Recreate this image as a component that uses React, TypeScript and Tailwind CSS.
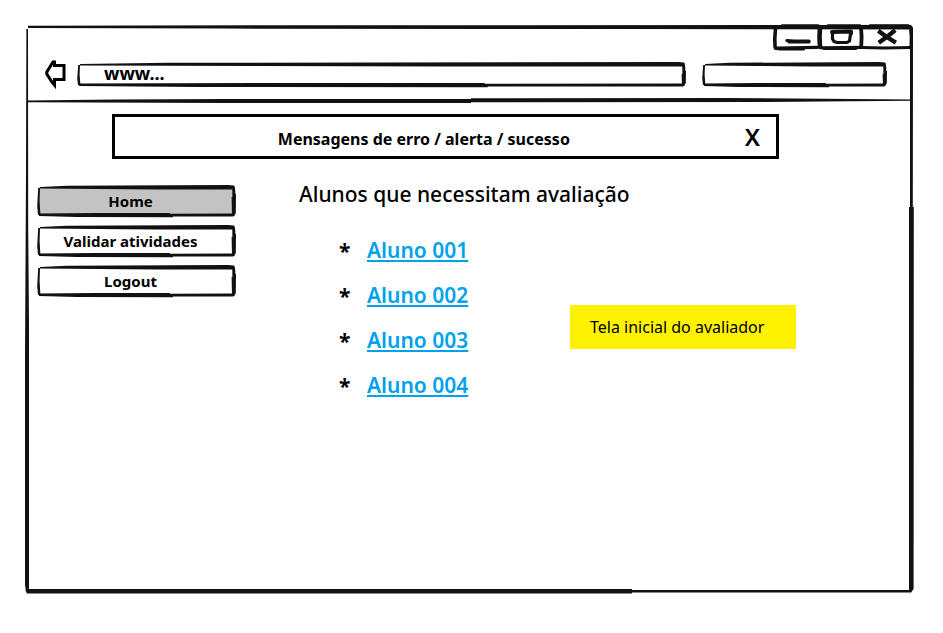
import type { ReactNode } from "react";

const INK = "#111";
const students = ["Aluno 001", "Aluno 002", "Aluno 003", "Aluno 004"];
const menu = [
  { label: "Home", active: true },
  { label: "Validar atividades", active: false },
  { label: "Logout", active: false },
];

/* Marker-pen outline: strokes swell and thin out along each side. */
function PenOutline({ w, h }: { w: number; h: number }) {
  const mid = Math.round(w * 0.67);
  return (
    <svg
      aria-hidden="true"
      className="pointer-events-none absolute inset-0 h-full w-full overflow-visible"
      viewBox={`0 0 ${w} ${h}`}
      preserveAspectRatio="none"
      fill={INK}
    >
      <path d={`M3 2 L${w * 0.15} 0.8 L${w - 8} 0 L${w - 2} 0.6 L${w - 2} 4.4 L${w * 0.6} 4.4 L${w * 0.3} 4 L3 3.6 Z`} />
      <path
        d={`M2 ${h - 3.4} L${w * 0.3} ${h - 4} L${mid} ${h - 4} L${mid} ${h - 3.2} L${w - 2} ${h - 3.4} L${w - 3} ${h - 0.4} L${mid + 3} ${h - 0.4} L${mid + 3} ${h + 0.2} L${w * 0.2} ${h} L2 ${h - 1} Z`}
      />
      <path d={`M1.2 3 L3 3 L2.6 ${h / 2} L3.4 ${h - 2} L1 ${h - 2} L0.2 ${h * 0.65} Z`} />
      <path
        d={`M${w - 3.8} 1 L${w - 1.4} 1 L${w - 0.8} 5 L${w - 0.6} 9 L${w} 9 L${w - 0.2} ${h - 4} L${w - 2} ${h - 0.6} L${w - 4} ${h - 2} L${w - 4.4} 12 L${w - 3.6} 12 Z`}
      />
    </svg>
  );
}

function WindowOutline() {
  return (
    <svg
      aria-hidden="true"
      className="pointer-events-none absolute inset-0 h-full w-full overflow-visible"
      viewBox="0 0 888 568"
      preserveAspectRatio="none"
      fill={INK}
    >
      <path d="M3 0.800 L300 0.200 L884 0 L888 2 L887 4.400 L600 4 L200 3.600 L3 3 Z" />
      <path d="M1.400 4 L3 4 L3.200 200 L4 300 L4 566 L1 566 L0 560 L0 330 L1 150 Z" />
      <path d="M885 2 L888 3 L887.800 182 L888.800 182 L888.600 564 L886 567.400 L884 566 L884 182 L885 182 Z" />
      <path d="M1 564 L607 564 L607 565 L887 565 L886 567.600 L607 567.600 L607 568.400 L2 568.400 L0.600 566 Z" />
    </svg>
  );
}

function Divider() {
  return (
    <svg
      aria-hidden="true"
      className="block h-[5px] w-full"
      viewBox="0 0 888 5"
      preserveAspectRatio="none"
      fill={INK}
    >
      <path d="M2 2.600 L90 1.600 L200 1 L446 1 L446 0.200 L700 0 L887 1.600 L887 2.800 L740 4 L446 4.200 L446 5 L200 5 L2 4.200 Z" />
    </svg>
  );
}

function ControlsOutline() {
  return (
    <svg
      aria-hidden="true"
      className="pointer-events-none absolute inset-0 h-full w-full overflow-visible"
      viewBox="0 0 139 26"
      preserveAspectRatio="none"
      fill="none"
      stroke={INK}
      strokeLinecap="round"
    >
      <path d="M3 2 L136 1.500" strokeWidth="3.600" />
      <path d="M8 0.500 L44 0.500 M54 0.500 L86 0.500 M96 0.500 L134 0.500" strokeWidth="2.400" />
      <path d="M1.500 4 L0.800 13 L1 21 Q1 23.400 3 23.400" strokeWidth="3.600" />
      <path d="M4 23 L43 22.400" strokeWidth="3.200" />
      <path d="M5 24.500 L30 24.500 M50 24 L82 24" strokeWidth="2" />
      <path d="M46 2 L45.500 12 L46 22" strokeWidth="4.600" />
      <path d="M48 22.800 L88 22.400" strokeWidth="3.200" />
      <path d="M87 2 L87.600 12 L87.200 22" strokeWidth="3.800" />
      <path d="M88 22.400 L110 23 L137 22.600" strokeWidth="3" />
      <path d="M136.500 3 L137.200 12 L137 21" strokeWidth="3" />
    </svg>
  );
}

function PenBox({ w, h, className, children }: { w: number; h: number; className: string; children: ReactNode }) {
  return (
    <div className={`relative ${className}`}>
      {children}
      <PenOutline w={w} h={h} />
    </div>
  );
}

export default function App() {
  return (
    <div className="flex min-h-screen bg-white pt-[25px] pr-[30px] pb-10 pl-[25px] font-['Comic_Sans_MS','Noto_Sans',sans-serif] text-black">
      <div className="relative flex-1">
        <WindowOutline />
        <header>
          <div className="flex justify-end">
            <div className="relative flex h-[26px]">
              <button type="button" aria-label="Minimizar" className="w-[46px]">
                <svg className="block h-full w-full" viewBox="0 0 46 26" fill="none" stroke={INK} strokeLinecap="round">
                  <path d="M13 15.500 L20 16 L35 16" strokeWidth="3.200" />
                  <path d="M15 17 L35 17" strokeWidth="3" />
                </svg>
              </button>
              <button type="button" aria-label="Maximizar" className="w-[42px]">
                <svg className="block h-full w-full" viewBox="0 0 42 26" fill="none" stroke={INK} strokeLinejoin="round" strokeLinecap="round">
                  <path d="M12 7 L31 6.500 L31 8.500" strokeWidth="4" />
                  <path d="M12.500 8 L12.500 14 L14 16.500 L17 17.500 L27 17.500 L29.500 16 L30.500 9" strokeWidth="3.200" />
                </svg>
              </button>
              <button type="button" aria-label="Fechar" className="w-[51px]">
                <svg className="block h-full w-full" viewBox="0 0 51 26" fill="none" stroke={INK} strokeLinecap="square">
                  <path d="M18 7 L24 11.500 L32 16.500" strokeWidth="4.400" />
                  <path d="M31.500 6.500 L26 11 L18.500 16.500" strokeWidth="4.400" />
                </svg>
              </button>
              <ControlsOutline />
            </div>
          </div>
          <div className="mt-[11px] mb-[11px] flex items-center pr-[26px] pl-5">
            <button type="button" aria-label="Voltar" className="mr-[10px]">
              <svg className="-my-1 block h-8 w-[22px]" viewBox="0 0 22 32" fill="none" stroke="#000" strokeWidth="3" strokeLinejoin="miter">
                <path d="M9.500 3 L8 3 L1.800 13 L1.800 15 L7 23 L9.500 26 L9.500 20.500 L19 20.500 L19 6.500 L9.500 6.500 Z" />
              </svg>
            </button>
            <PenBox w={608} h={25} className="flex-1">
              <input
                aria-label="Endereço"
                defaultValue="www..."
                className="block h-[25px] w-full bg-transparent pb-1 pl-[27px] text-lg font-bold outline-none"
              />
            </PenBox>
            <PenBox w={185} h={25} className="ml-4 w-[185px]">
              <input aria-label="Pesquisar" className="block h-[25px] w-full bg-transparent px-3 outline-none" />
            </PenBox>
          </div>
          <Divider />
        </header>

        <div role="alert" className="mt-[11px] mr-[134px] ml-[87px] flex h-[45px] items-center border-[3px] border-black pt-px pr-4">
          <p className="flex-1 pt-1 pr-3 text-center text-base font-bold leading-6">Mensagens de erro / alerta / sucesso</p>
          <button type="button" aria-label="Fechar mensagem" className="text-2xl font-semibold leading-6">
            X
          </button>
        </div>

        <div className="flex pl-3">
          <nav className="mt-[26px] flex w-[199px] flex-col gap-2">
            {menu.map((item) => (
              <PenBox key={item.label} w={199} h={32} className="h-8 p-0.5">
                <button
                  type="button"
                  className={`block h-full w-full pr-3 text-[15px] font-bold leading-5 ${item.active ? "bg-[#c3c3c3]" : "bg-white"}`}
                >
                  {item.label}
                </button>
              </PenBox>
            ))}
          </nav>

          <main className="mt-[21px] ml-[63px] flex-1">
            <h1 className="text-[21px] font-medium leading-7">Alunos que necessitam avaliação</h1>
            <div className="mt-[19px] flex items-start">
              <ul className="w-[271px] pl-10">
                {students.map((name) => (
                  <li key={name} className="flex h-[45px] items-center">
                    <span className="w-7 pt-0.5 text-[21px] font-bold leading-6">*</span>
                    <a href="#" className="text-[21px] font-semibold leading-7 text-[#00a2e8] underline decoration-2 underline-offset-2">
                      {name}
                    </a>
                  </li>
                ))}
              </ul>
              <p className="mt-[78px] w-[226px] bg-[#fff200] py-3 pl-5 text-base leading-5">Tela inicial do avaliador</p>
            </div>
          </main>
        </div>
      </div>
    </div>
  );
}
